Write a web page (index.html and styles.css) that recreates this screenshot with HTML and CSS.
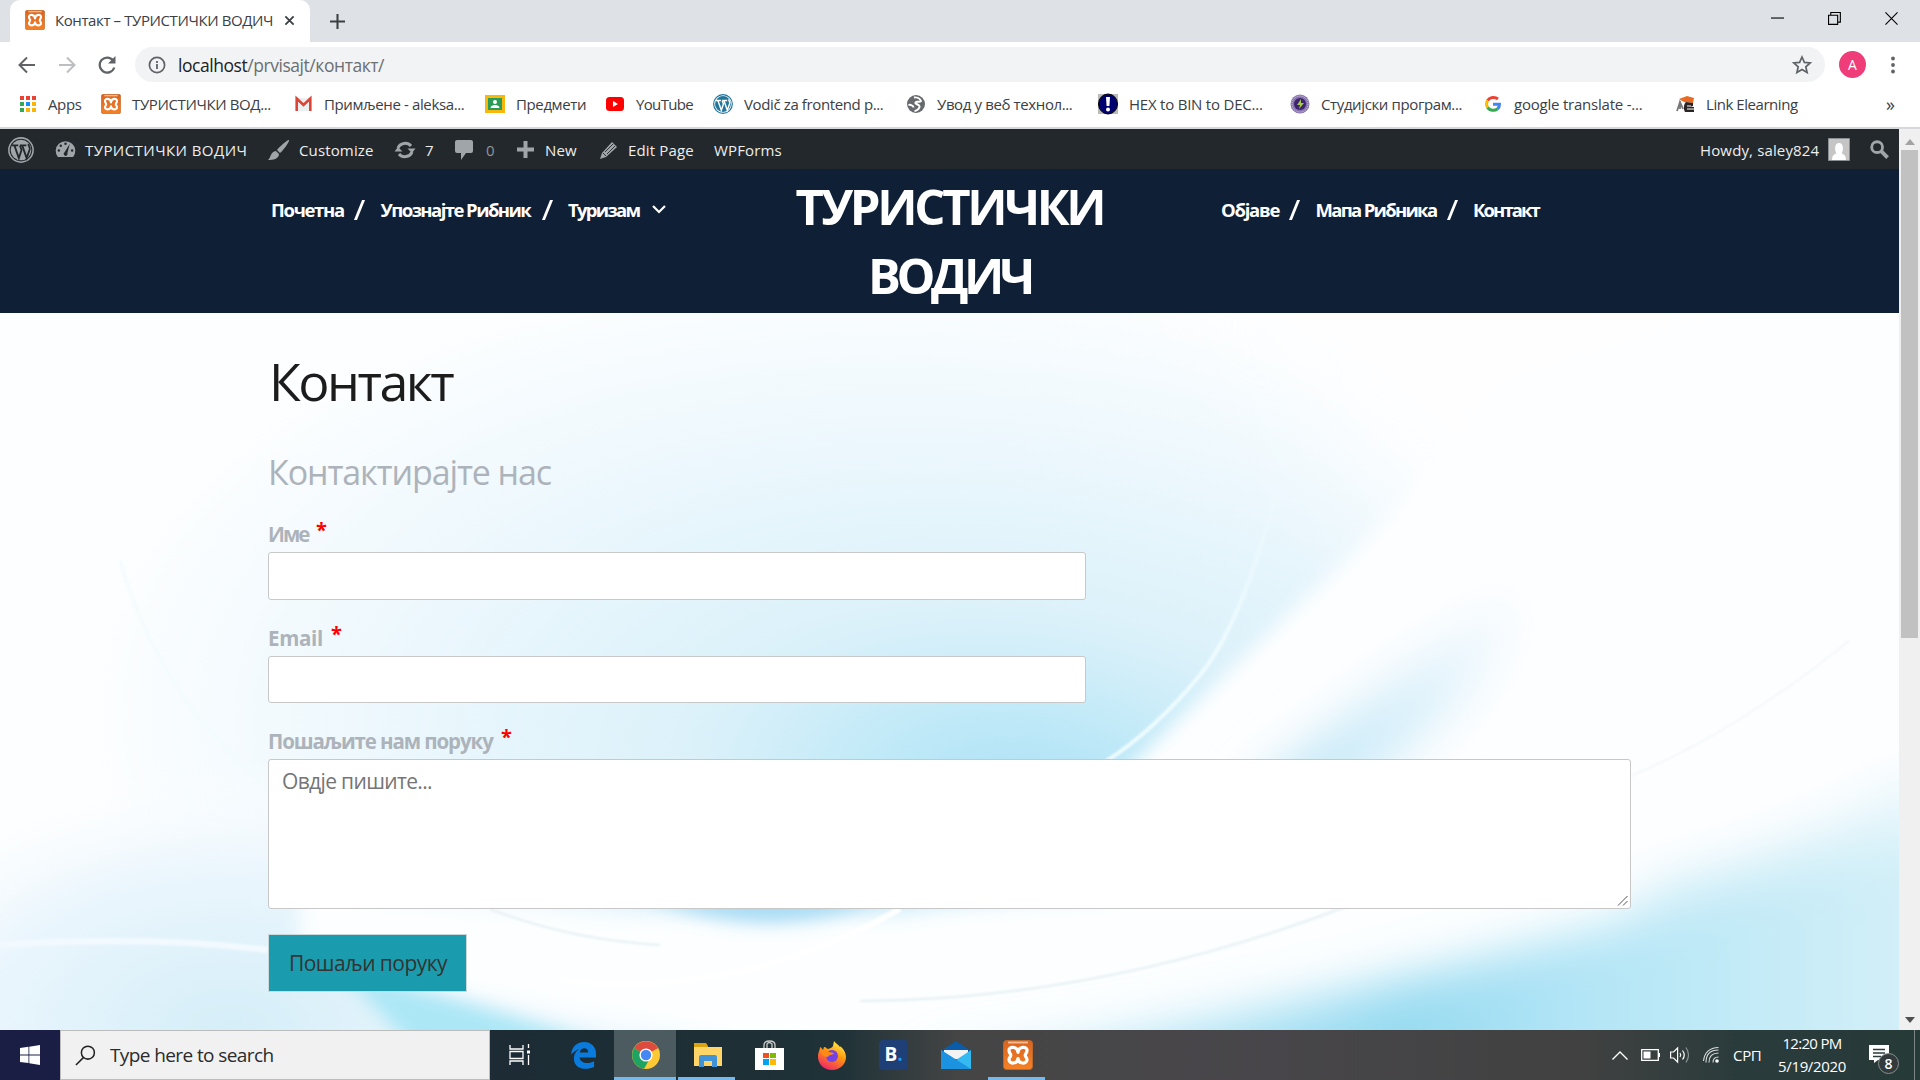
FILE: index.html
```html
<!DOCTYPE html>
<html lang="sr">
<head>
<meta charset="utf-8">
<title>Контакт – ТУРИСТИЧКИ ВОДИЧ</title>
<link rel="stylesheet" href="styles.css">
</head>
<body>
<svg class="defs" aria-hidden="true">
  <defs>
    <linearGradient id="xg" x1="0" y1="0" x2="0" y2="1"><stop offset="0" stop-color="#d9631f"/><stop offset="1" stop-color="#f58126"/></linearGradient>
    <symbol id="xampp" viewBox="0 0 30 30"><rect x=".5" y=".5" width="29" height="29" rx="3" fill="url(#xg)" stroke="#b8692f"/><path d="M5 2.500h20" stroke="#f9b68a" stroke-width="2"/><path d="M15 12.500C14.500 6 5.500 6 6 10.500 6 13 7.800 14 7.800 15.300 7.800 16.800 5.800 18 6 20 6.500 24.500 14.500 24 15 18.500 15.500 24 23.500 24.500 24 20 24.200 18 22.200 16.800 22.200 15.300 22.200 14 24 13 24 10.500 24.500 6 15.500 6 15 12.500z" fill="none" stroke="#fff" stroke-width="3.200" stroke-linejoin="round"/></symbol>
    <symbol id="wp" viewBox="0 0 24 24"><circle cx="12" cy="12" r="11.200" fill="none" stroke="currentColor" stroke-width="1.400"/><circle cx="12" cy="12" r="9.500" fill="currentColor"/><path d="M3.500 7.800h6M11 7.800h6M6 8l4 11.500L12.500 12 11 7.800M13.200 8l4 11.500L20 11.500c.7-2.500-1.500-3-1-5" fill="none" stroke="var(--w)" stroke-width="1.700"/></symbol>
  </defs>
</svg>

<div class="tabstrip">
  <div class="tab">
    <svg class="i20"><use href="#xampp"/></svg>
    <span class="tab-title">Контакт – ТУРИСТИЧКИ ВОДИЧ</span>
    <svg class="tab-close" viewBox="0 0 12 12"><path d="M1.500 1.500l9 9M10.500 1.500l-9 9" stroke="#3c4043" stroke-width="2"/></svg>
  </div>
  <svg class="tab-new" viewBox="0 0 16 16"><path d="M8 0v16M0 8h16" stroke="#3c4043" stroke-width="2.200"/></svg>
  <div class="window-buttons">
    <svg viewBox="0 0 14 14"><path d="M0 6.500h14" stroke="#000" stroke-width="1.200"/></svg>
    <svg viewBox="0 0 14 14"><path d="M.6 3.500h9.800v9.800H.6zM3 3.500V.6h10.300v10.300h-3" fill="none" stroke="#000" stroke-width="1.200"/></svg>
    <svg viewBox="0 0 14 14"><path d="M.5.5l13 13M13.500.5l-13 13" stroke="#000" stroke-width="1.200"/></svg>
  </div>
</div>

<div class="toolbar">
  <svg class="nav-icon" viewBox="0 0 20 20"><path d="M18 10H3M10 2.500L2.500 10l7.500 7.500" fill="none" stroke="#5f6368" stroke-width="2"/></svg>
  <svg class="nav-icon" viewBox="0 0 20 20"><path d="M2 10h15M10 2.500l7.500 7.500-7.500 7.500" fill="none" stroke="#bcbec1" stroke-width="2"/></svg>
  <svg class="nav-icon" viewBox="0 0 20 20"><path d="M16.500 6A7.500 7.500 0 1 0 17.300 12.500" fill="none" stroke="#5f6368" stroke-width="2.200"/><path d="M18.500 1v7.500H11z" fill="#5f6368"/></svg>
  <div class="omnibox">
    <svg class="info" viewBox="0 0 18 18"><circle cx="9" cy="9" r="7.600" fill="none" stroke="#5f6368" stroke-width="1.700"/><path d="M9 8v5M9 5v2" stroke="#5f6368" stroke-width="1.800"/></svg>
    <span class="url"><b>localhost</b>/prvisajt/контакт/</span>
    <svg class="star" viewBox="0 0 20 20"><path d="M10 2l2.400 5.400 5.800.5-4.400 3.900 1.300 5.700-5.100-3-5.100 3 1.300-5.700L1.800 7.900l5.800-.5z" fill="none" stroke="#5f6368" stroke-width="1.700"/></svg>
  </div>
  <span class="profile">A</span>
  <svg class="menu" viewBox="0 0 4 18"><circle cx="2" cy="2.500" r="1.900"/><circle cx="2" cy="9" r="1.900"/><circle cx="2" cy="15.500" r="1.900"/></svg>
</div>

<div class="bookmarks">
  <div class="bm"><svg class="i20" viewBox="0 0 20 20"><g fill="#ea4335"><path d="M3 2h4v4H3zM9 2h4v4H9zM15 2h4v4h-4z"/></g><path d="M3 8h4v4H3zM3 14h4v4H3z" fill="#34a853"/><path d="M9 8h4v4H9z" fill="#1a8cff"/><path d="M15 8h4v4h-4zM9 14h4v4H9zM15 14h4v4h-4z" fill="#fbb605"/></svg><span>Apps</span></div>
  <div class="bm"><svg class="i20"><use href="#xampp"/></svg><span>ТУРИСТИЧКИ ВОД...</span></div>
  <div class="bm"><svg class="i20" viewBox="0 0 20 20"><path d="M3 4h15v13H3z" fill="#eceff1"/><path d="M3.700 17V4.500L10.500 11l6.800-6.500V17" fill="none" stroke="#db4437" stroke-width="2.600"/></svg><span>Примљене - aleksa...</span></div>
  <div class="bm"><svg class="i20" viewBox="0 0 20 20"><path d="M0 1h20v18H0z" fill="#f6b80c"/><path d="M3 4h14v12H3z" fill="#2c9b58"/><circle cx="10" cy="8" r="2" fill="#fff"/><path d="M5.500 14c0-4 9-4 9 0z" fill="#fff"/></svg><span>Предмети</span></div>
  <div class="bm"><svg class="i20" viewBox="0 0 20 20"><rect x="1" y="3" width="18" height="14" rx="3.500" fill="#f00"/><path d="M8 7l5 3-5 3z" fill="#fff"/></svg><span>YouTube</span></div>
  <div class="bm"><svg class="i20 wp-blue"><use href="#wp"/></svg><span>Vodič za frontend p...</span></div>
  <div class="bm"><svg class="i20" viewBox="0 0 20 20"><circle cx="10" cy="10" r="9" fill="#66696d"/><path d="M8 3.500c3-.5 6 1 7 3.500-2 2-4-.5-5.500 1.500-1 2 4.500 1.500 4 4.500-.5 2-3 4-5 4M2.500 11c2-.5 5 .5 5 2.500" fill="none" stroke="#fff" stroke-width="2"/></svg><span>Увод у веб технол...</span></div>
  <div class="bm"><svg class="i20" viewBox="0 0 20 20"><path d="M0 0h20v20H0z" fill="#bbb"/><ellipse cx="10" cy="10" rx="9.500" ry="10" fill="#00006e" stroke="#000"/><path d="M8 3h4l-.6 9H8.600z" fill="#fff"/><circle cx="10" cy="15.500" r="2" fill="#fff"/></svg><span>HEX to BIN to DEC...</span></div>
  <div class="bm"><svg class="i20" viewBox="0 0 20 20"><circle cx="10" cy="10" r="9.500" fill="#8774ae"/><circle cx="10" cy="10" r="8" fill="none" stroke="#d5cbe4" stroke-dasharray="1 1"/><circle cx="10" cy="10" r="6" fill="#3e2372"/><path d="M11 5l-4 6h3l-1 4 5-6h-3z" fill="#a5c94a"/></svg><span>Студијски програм...</span></div>
  <div class="bm"><svg class="i20" viewBox="0 0 20 20" fill="none" stroke-width="3"><path d="M15 5A7 6.500 0 0 0 4.500 6.500" stroke="#ea4335"/><path d="M4.500 6.500a7 7 0 0 0 0 7" stroke="#fbbc05"/><path d="M4.500 13.500A7 6.500 0 0 0 14.500 15" stroke="#34a853"/><path d="M14.500 15c1.500-1.300 2-3 2-4.800H10" stroke="#4285f4"/></svg><span>google translate -...</span></div>
  <div class="bm"><svg class="i20" viewBox="0 0 20 20"><path d="M4 5l8-3 7 2-1 5-9-1z" fill="#e96a20"/><path d="M5 7v8M2 17l3-9 3 7" fill="none" stroke="#777" stroke-width="1.800"/><path d="M11 8l7 1v3l-3 1h4v5h-9c-2-4-1-8 1-10z" fill="#2a2422"/><path d="M12 12h4M12 15h7" stroke="#fff"/></svg><span>Link Elearning</span></div>
  <span class="more">»</span>
</div>

<div class="viewport">
  <div class="page">
    <div class="adminbar">
      <svg class="wp-grey"><use href="#wp"/></svg>
      <svg class="ab-dash" viewBox="0 0 22 20"><path d="M3 18a10.300 10.300 0 1 1 16 0z" fill="#a0a5aa"/><g fill="#23282d"><circle cx="11" cy="4" r="1.300"/><circle cx="6" cy="6" r="1.300"/><circle cx="4" cy="11" r="1.300"/><circle cx="18" cy="11" r="1.300"/><path d="M15.500 4L13 14a2 2 0 1 1-3-1z"/></g></svg>
      <span class="ab-site">ТУРИСТИЧКИ ВОДИЧ</span>
      <svg class="ab-brush" viewBox="0 0 22 22"><path d="M21 1c1 1-6 11-9 13l-3-3C11 8 20 0 21 1zM8 12l3 3c0 5-6 6-11 6 3-2 2-8 8-9z" fill="#a0a5aa"/></svg>
      <span class="ab-cust">Customize</span>
      <svg class="ab-upd" viewBox="0 0 22 20"><path d="M4 8a7.500 7 0 0 1 13-2M18 12a7.500 7 0 0 1-13 2" fill="none" stroke="#a0a5aa" stroke-width="3"/><path d="M13.500 8.500h8L18 13zM.5 11.500h8L4 7z" fill="#a0a5aa"/></svg>
      <span class="ab-seven">7</span>
      <svg class="ab-com" viewBox="0 0 18 20"><path d="M2 0h14q2 0 2 2v9q0 2-2 2h-5l-5 7v-7H2q-2 0-2-2V2q0-2 2-2z" fill="#a0a5aa"/></svg>
      <span class="ab-zero">0</span>
      <svg class="ab-plus" viewBox="0 0 17 17"><path d="M8.500 0v17M0 8.500h17" stroke="#a0a5aa" stroke-width="4"/></svg>
      <span class="ab-new">New</span>
      <svg class="ab-pen" viewBox="0 0 18 18"><path d="M12 1l5 5L6 16l-6 2 2-6z" fill="#a0a5aa"/><path d="M3 12l3 3M5 11l8-8M7 13l8-8" stroke="#23282d" stroke-width=".9"/></svg>
      <span class="ab-edit">Edit Page</span>
      <span class="ab-forms">WPForms</span>
      <span class="ab-howdy">Howdy, saley824</span>
      <svg class="ab-avatar" viewBox="0 0 22 23"><path d="M.5.5h21v22H.5z" fill="#c5c5c5" stroke="#8a8f94"/><path d="M4 22c0-4 2-6 4.500-6.500C6.500 13 6 5 11 5s4.500 8 2.500 10.500C16 16 18 18 18 22z" fill="#fff"/></svg>
      <svg class="ab-search" viewBox="0 0 20 20"><circle cx="7.500" cy="7.500" r="5.700" fill="none" stroke="#a0a5aa" stroke-width="3"/><path d="M11.500 11.500l7 7" stroke="#a0a5aa" stroke-width="4"/></svg>
    </div>

    <header class="site-header">
      <nav class="nav-left">
        <span class="n1">Почетна</span><i></i><span class="n2">Упознајте Рибник</span><i></i><span class="n3">Туризам</span>
        <svg class="chev" viewBox="0 0 14 9"><path d="M1 1l6 6 6-6" fill="none" stroke="#fff" stroke-width="2.200"/></svg>
      </nav>
      <div class="site-title"><span class="t1">ТУРИСТИЧКИ</span><span class="t2">ВОДИЧ</span></div>
      <nav class="nav-right">
        <span class="n4">Објаве</span><i></i><span class="n5">Мапа Рибника</span><i></i><span class="n6">Контакт</span>
      </nav>
    </header>

    <main class="content">
      <svg class="backdrop" viewBox="0 313 1899 717" preserveAspectRatio="none">
        <defs>
          <radialGradient id="glow" gradientUnits="userSpaceOnUse" cx="0" cy="0" r="1" gradientTransform="translate(1030 800) rotate(8) scale(960 520)"><stop offset="0" stop-color="#ace1f7"/><stop offset=".14" stop-color="#bde8f7"/><stop offset=".35" stop-color="#dbf1fa"/><stop offset=".65" stop-color="#ebf7fd"/><stop offset="1" stop-color="#fdfeff"/></radialGradient>
          <radialGradient id="left" gradientUnits="userSpaceOnUse" cx="0" cy="0" r="1" gradientTransform="translate(230 1030) scale(440 270)"><stop offset="0" stop-color="#d5eef8"/><stop offset=".6" stop-color="#ebf6fd"/><stop offset="1" stop-color="#fff" stop-opacity="0"/></radialGradient>
          <linearGradient id="deep" gradientUnits="userSpaceOnUse" x1="1000" y1="0" x2="1899" y2="0"><stop offset="0" stop-color="#c5eaf7"/><stop offset=".45" stop-color="#98dbf1"/><stop offset=".65" stop-color="#b3e5f6"/><stop offset="1" stop-color="#d2eff8"/></linearGradient>
          <linearGradient id="arc" gradientUnits="userSpaceOnUse" x1="0" y1="470" x2="0" y2="640"><stop offset="0" stop-color="#effcff" stop-opacity="0"/><stop offset="1" stop-color="#effcff"/></linearGradient>
          <linearGradient id="streak" gradientUnits="userSpaceOnUse" x1="1290" y1="780" x2="1500" y2="590"><stop offset="0" stop-color="#bfe6f6"/><stop offset="1" stop-color="#f4faff"/></linearGradient>
          <filter id="b30" x="-50%" y="-50%" width="200%" height="200%"><feGaussianBlur stdDeviation="24"/></filter>
          <filter id="b60" x="-60%" y="-60%" width="220%" height="220%"><feGaussianBlur stdDeviation="60"/></filter>
          <filter id="b12" x="-50%" y="-50%" width="200%" height="200%"><feGaussianBlur stdDeviation="9"/></filter>
          <filter id="b1" x="-10%" y="-10%" width="120%" height="120%"><feGaussianBlur stdDeviation="1"/></filter>
        </defs>
        <path d="M0 313h1899v717H0z" fill="#fdfeff"/>
        <path d="M0 313h1899v717H0z" fill="url(#glow)"/>
        <path d="M0 313h1899v717H0z" fill="url(#left)"/>
        <path d="M1120 200Q1310 330 1410 520L1700 700V200z" fill="#fefeff" filter="url(#b60)"/>
        <path d="M1110 785Q1240 660 1330 575T1500 380L1950 250V1100H1110z" fill="#fdfeff" filter="url(#b12)"/>
        <path d="M1240 800Q1370 690 1520 590 1490 710 1330 800z" fill="url(#streak)" filter="url(#b30)"/>
        <path d="M300 885Q480 910 620 915H900Q1000 890 1640 880L1500 1050H760Q520 1000 300 970z" fill="#fcfeff" filter="url(#b12)"/>
        <path d="M620 885H900Q850 918 780 922T620 885z" fill="#a8dcf4" filter="url(#b12)"/>
        <path d="M340 970Q480 1005 640 1055H420z" fill="#ace7f6" filter="url(#b12)"/>
        <path d="M1640 880Q1780 850 1930 770V900L1640 980z" fill="#e4f5fb" filter="url(#b30)"/>
        <path d="M940 1065Q1300 1015 1640 915 1800 860 1950 830V1120H940z" fill="url(#deep)" filter="url(#b30)"/>
        <g fill="none" filter="url(#b1)"><path d="M1282 470Q1245 620 1200 675T1105 762" stroke="url(#arc)" stroke-width="4"/><path d="M1850 640Q1740 730 1631 776" stroke="#f3f8fa" stroke-width="2"/><path d="M490 909Q570 940 660 945M860 1001Q1100 1000 1345 907" stroke="#e3eff2" stroke-width="2"/><path d="M900 909Q740 1000 560 980" stroke="#fff" stroke-width="6"/><path d="M120 560Q160 700 270 790" stroke="#f3fcfd" stroke-width="3"/><path d="M0 945Q150 935 268 950" stroke="#f3faff" stroke-width="6"/></g>
      </svg>
      <h1>Контакт</h1>
      <h2>Контактирајте нас</h2>
      <form class="form">
        <label><span class="l1">Име</span><sup>*</sup></label>
        <div class="field"></div>
        <label><span class="l2">Email</span><sup>*</sup></label>
        <div class="field"></div>
        <label><span class="l3">Пошаљите нам поруку</span><sup>*</sup></label>
        <div class="message"><span>Овдје пишите...</span><svg viewBox="0 0 11 11"><path d="M1 10.500l9.500-9.500M6 10.500L10.500 6" stroke="#555" stroke-width="1"/></svg></div>
        <div class="submit"><span>Пошаљи поруку</span></div>
      </form>
    </main>
  </div>
  <div class="scrollbar">
    <svg viewBox="0 0 10 6"><path d="M0 6l5-6 5 6z" fill="#a3a3a3"/></svg>
    <div class="thumb"></div>
    <svg viewBox="0 0 10 6"><path d="M0 0l5 6 5-6z" fill="#505050"/></svg>
  </div>
</div>

<div class="taskbar">
  <div class="start"><svg viewBox="0 0 20 20"><path d="M0 3l8.500-1.200v7.700H0zM9.300 1.700L20 0v9.500H9.300zM0 10.400h8.500v7.700L0 17zM9.300 10.400H20V20L9.300 18.300z" fill="#fff"/></svg></div>
  <div class="search"><svg viewBox="0 0 22 22"><circle cx="13.500" cy="8" r="6.800" fill="none" stroke="#222" stroke-width="1.600"/><path d="M9 13l-8 8" stroke="#222" stroke-width="1.600"/></svg><span>Type here to search</span></div>
  <div class="task"><svg width="22" height="22" viewBox="0 0 22 22"><path d="M1 1v4h13V1M1 21v-4h13v4M1 7.500h13v7H1zM19.500 0v4M19.500 11v10" fill="none" stroke="#fff" stroke-width="1.300"/><path d="M18 6.500h3v3h-3z" fill="#fff"/></svg></div>
  <div class="task"><svg width="25" height="27" viewBox="0 0 26 28"><path d="M0 13C1 4 7 0 13.500 0 21 0 26 5 26 12v4H9c0 5 8 8 15 4v6c-9 4-21 2-21-9 0-5 3-8 6-10-3 1-6 3-9 6zM9 11h9c0-6-8-6-9 0z" fill="#0a7bdc"/></svg></div>
  <div class="task active"><svg width="28" height="28" viewBox="0 0 28 28"><circle cx="14" cy="14" r="14" fill="#fcc934"/><path d="M14 14L2 7A14 14 0 0 1 26.100 7z" fill="#dd4b3e"/><path d="M14 14L2 7a14 14 0 0 0 10 20.800l7-12z" fill="#1da462"/><circle cx="14" cy="14" r="6.600" fill="#fff"/><circle cx="14" cy="14" r="5.200" fill="#4587f3"/></svg></div>
  <div class="task files"><svg width="28" height="24" viewBox="0 0 28 24"><path d="M0 0h12l2 3v5H0z" fill="#dda20f"/><path d="M0 4h28v19H0z" fill="#ffd567"/><path d="M5 24V14q0-2 2-2h14q2 0 2 2v10h-5v-6h-8v6z" fill="#3f93d6"/></svg></div>
  <div class="task"><svg width="29" height="30" viewBox="0 0 29 30"><path d="M9 8V5q0-4 5.500-4T20 5v3M12 8V4q2-3 5 0v4" fill="none" stroke="#ccc" stroke-width="1.300"/><path d="M0 8h29v22H0z" fill="#fff"/><path d="M8 13h6v5H8z" fill="#f25022"/><path d="M15 13h6v5h-6z" fill="#7fba00"/><path d="M8 19h6v6H8z" fill="#00a4ef"/><path d="M15 19h6v6h-6z" fill="#ffb900"/></svg></div>
  <div class="task"><svg width="28" height="29" viewBox="0 0 28 29"><defs><linearGradient id="ff" x1=".8" y1="0" x2=".3" y2="1"><stop offset="0" stop-color="#fff44f"/><stop offset=".45" stop-color="#ff980e"/><stop offset="1" stop-color="#f0246a"/></linearGradient></defs><path d="M16 0c2 3 4 3 6 6 0-2 6 4 6 10 0 7-6 13-14 13S0 23 0 16c0-5 2-7 2-10 2 1 2 2 3 3l1-3c2 0 3 2 4 2 2-1 4-1 5-3z" fill="url(#ff)"/><circle cx="14" cy="15" r="6" fill="#7542e5"/><path d="M3 10c4-2 6-1 8 1l5 1c-2 3-5 1-6 4-5 0-6-3-7-6z" fill="#ff8a16"/></svg></div>
  <div class="task"><div class="booking">B<em>.</em></div></div>
  <div class="task"><svg width="30" height="28" viewBox="0 0 30 28"><path d="M0 10L15 0l15 10z" fill="#0a5ba8"/><path d="M3 9h24v9H3z" fill="#f3f3f3"/><path d="M0 9l15 10L30 9v19H0z" fill="#35b9f1"/><path d="M0 9l30 19H0z" fill="#1c93e0"/></svg></div>
  <div class="task open"><svg width="30" height="30"><use href="#xampp"/></svg></div>
  <div class="tray">
    <svg class="t-up" viewBox="0 0 16 9"><path d="M.5 8.500L8 1l7.500 7.500" fill="none" stroke="#fff" stroke-width="1.400"/></svg>
    <svg class="t-bat" viewBox="0 0 19 12"><path d="M.7.700h16.600v10.600H.7z" fill="none" stroke="#fff" stroke-width="1.300"/><path d="M2.500 2.500h7v7h-7zM17.500 4H19v4h-1.500z" fill="#fff"/></svg>
    <svg class="t-vol" viewBox="0 0 20 18"><path d="M.6 6h3l4-4v14l-4-4h-3z" fill="none" stroke="#fff" stroke-width="1.200"/><path d="M10 7q1.500 2 0 4M12.500 4.500q3.500 4.500 0 9" fill="none" stroke="#fff" stroke-width="1.200"/><path d="M16 1.500q5 7.500 0 15" fill="none" stroke="#8a9090" stroke-width="1.200"/></svg>
    <svg class="t-wifi" viewBox="0 0 16 16"><circle cx="14" cy="14" r="1.800" fill="#fff"/><path d="M10 15.500Q10 10 15.500 10M6 15.500Q6 6 15.500 6M3 15.500Q3 3 15.500 3M.5 14Q2 1 15.500.5" fill="none" stroke="#d8dcdc" stroke-width="1.100"/></svg>
    <span class="lang">СРП</span>
    <div class="clock"><span class="tm">12:20 PM</span><span class="dt">5/19/2020</span></div>
    <div class="notif"><svg viewBox="0 0 20 18"><path d="M0 0h20v15H9l-4 3v-3H0z" fill="#fff"/><path d="M4 4.500h12M4 8h12M4 11.500h8" stroke="#2a3b3b" stroke-width="1.300"/></svg><b>8</b></div>
    <div class="peek"></div>
  </div>
</div>
</body>
</html>
```

FILE: styles.css
```css
* { box-sizing: border-box; }
body { margin: 0; width: 1920px; height: 1080px; overflow: hidden; display: flex; flex-direction: column; background: #fff; font-family: "Open Sans", "Noto Sans", sans-serif; font-size: 15px; color: #3c4043; }
svg { display: block; flex: none; overflow: visible; }
span { white-space: nowrap; flex: none; }
.defs { position: absolute; width: 0; height: 0; }
.i20 { width: 20px; height: 20px; }

/* browser window */
.tabstrip { height: 42px; background: #dee1e6; display: flex; align-items: center; }
.tab { width: 300px; height: 42px; margin-left: 10px; padding: 0 14px 2px 15px; background: #fff; border-radius: 10px 10px 0 0; display: flex; align-items: center; }
.tab-title { width: 229px; margin-left: 10px; letter-spacing: -.4px; }
.tab-close { width: 11px; height: 11px; }
.tab-new { width: 15px; height: 15px; margin-left: 20px; }
.window-buttons { margin-left: auto; margin-right: 22px; display: flex; gap: 44px; margin-top: -5px; }
.window-buttons svg { width: 13px; height: 13px; }
.toolbar { height: 44px; padding: 1px 25px 0 17px; display: flex; align-items: center; }
.nav-icon { width: 20px; height: 20px; margin-right: 20px; }
.omnibox { width: 1690px; height: 35px; border-radius: 18px; background: #f1f3f4; display: flex; align-items: center; padding: 0 13px; margin-left: -2px; }
.info { width: 18px; height: 18px; }
.url { margin-left: 12px; font-size: 17.500px; letter-spacing: -.45px; color: #6b6f73; }
.url b { font-weight: 400; color: #202124; }
.star { width: 20px; height: 20px; margin-left: auto; }
.profile { width: 27px; height: 27px; margin-left: 14px; border-radius: 50%; background: #ee3d79; color: #fff; font-size: 14px; line-height: 27px; text-align: center; }
.menu { width: 4px; height: 18px; margin-left: auto; fill: #5f6368; }
.bookmarks { height: 43px; padding: 0 0 5px 17px; border-bottom: 2px solid #d6d8db; display: flex; align-items: center; }
.bm { width: 192px; display: flex; align-items: center; gap: 11px; letter-spacing: -.38px; }
.bm:nth-child(1) { width: 84px; }
.bm:nth-child(4) { width: 120px; }
.bm:nth-child(5) { width: 108px; letter-spacing: -.65px; }
.bm:nth-child(6), .bm:nth-child(9) { width: 193px; }
.bm:nth-child(8), .bm:nth-child(10) { letter-spacing: -.22px; }
.bm:nth-child(11) { width: 211px; letter-spacing: -.45px; }
.wp-blue { color: #21759b; --w: #fff; }
.more { font-size: 18px; }

.viewport { height: 901px; display: flex; }
.page { width: 1899px; display: flex; flex-direction: column; }
.scrollbar { width: 21px; background: #f0f0f0; display: flex; flex-direction: column; align-items: center; padding: 10px 0 7px; }
.scrollbar svg { width: 10px; height: 6px; }
.thumb { width: 17px; height: 488px; margin: 5px 0 auto; background: #c1c1c1; }

/* admin bar */
.adminbar { height: 40px; background: #23282d; color: #eee; display: flex; align-items: center; padding: 1px 10px 0 8px; letter-spacing: .14px; }
.wp-grey { width: 26px; height: 26px; color: #a0a5aa; --w: #23282d; }
.ab-dash { width: 21px; height: 19px; margin-left: 21px; }
.ab-site { width: 183px; margin-left: 9px; letter-spacing: .44px; }
.ab-brush { width: 22px; height: 22px; }
.ab-cust { width: 95px; margin-left: 9px; }
.ab-upd { width: 22px; height: 20px; }
.ab-seven { width: 30px; margin-left: 9px; }
.ab-com { width: 18px; height: 20px; }
.ab-zero { width: 31px; margin-left: 13px; color: #8f9498; }
.ab-plus { width: 17px; height: 17px; }
.ab-new { width: 55px; margin-left: 11px; }
.ab-pen { width: 18px; height: 18px; }
.ab-edit { width: 86px; margin-left: 10px; }
.ab-howdy { width: 128px; margin-left: auto; }
.ab-avatar { width: 22px; height: 23px; }
.ab-search { width: 19px; height: 19px; margin-left: 20px; }

/* site */
.site-header { height: 144px; background: #0f1f35; color: #fff; font-weight: 700; display: grid; grid-template-columns: 271px 500px 357px 93px 1fr; }
.nav-left { grid-column: 2; }
.nav-right { grid-column: 5; }
.nav-left, .nav-right { display: flex; align-items: center; height: 27px; margin-top: 27px; font-size: 18.500px; letter-spacing: -1.550px; }
.n1 { width: 73px; letter-spacing: -1.300px; }
.n2 { width: 151px; }
.n3 { width: 71px; letter-spacing: -1.700px; }
.n4 { width: 58px; letter-spacing: -1.250px; }
.n5 { width: 121px; letter-spacing: -1.700px; }
.n6 { width: 67px; letter-spacing: -1.900px; }
.site-header i { width: 2.500px; height: 20px; margin: 0 20px 0 14px; background: #fff; transform: skewX(-22deg); }
.chev { width: 14px; height: 9px; margin-left: 13px; }
.site-title { grid-column: 3; display: flex; flex-direction: column; align-items: center; padding-top: 3px; font-size: 49px; line-height: 69px; letter-spacing: -3.300px; }
.t2 { letter-spacing: -4.500px; }
.content { position: relative; height: 717px; padding-left: 268px; }
.backdrop { position: absolute; inset: 0; width: 100%; height: 100%; overflow: hidden; }
h1, h2, .form { position: relative; margin: 0; font-weight: 400; }
h1 { padding: 32px 0 0 1px; font-size: 52px; line-height: 72px; letter-spacing: -2.500px; color: #1c1c1c; }
h2 { padding: 31px 0 0 0; font-size: 34px; line-height: 48px; letter-spacing: -1.100px; color: #adb3ba; }
.form { padding-top: 22px; }
label { display: flex; height: 34px; line-height: 32px; font-size: 20.500px; font-weight: 700; color: #adb3ba; }
.l1 { width: 48px; letter-spacing: -2px; }
.l2 { width: 63px; letter-spacing: -.3px; }
.l3 { width: 233px; letter-spacing: -1.100px; }
sup { color: #f00; font-size: 20px; line-height: 24px; }
.field { width: 818px; height: 48px; margin-bottom: 22px; background: #fff; border: 1px solid #c8c8c8; border-radius: 3px; }
.field ~ .field { height: 47px; }
.message { position: relative; width: 1363px; height: 150px; padding: 4px 13px; background: #fff; border: 1px solid #c8c8c8; border-radius: 3px; font-size: 21px; line-height: 34px; letter-spacing: -.65px; color: #757575; }
.message > svg { position: absolute; right: 2px; bottom: 2px; width: 11px; height: 11px; }
.submit { width: 199px; height: 58px; margin-top: 25px; border: 1px solid #ccd8da; background: #1b9cae; color: #333; font-size: 21px; line-height: 56px; letter-spacing: -.55px; padding-left: 20px; }

/* taskbar */
.taskbar { height: 50px; display: flex; background: linear-gradient(90deg, #1c2b34 490px, #1f3237 840px, #454545 960px, #48464a 1250px, #414141 1580px, #2a3b3b 1740px, #263a38); }
.start { width: 60px; background: #1a1e45; display: flex; align-items: center; justify-content: center; }
.start svg { width: 20px; height: 20px; }
.search { width: 430px; background: #f1f1f1; border: 1px solid #bcbcbc; display: flex; align-items: center; padding-left: 14px; color: #2b2b2b; font-size: 19px; letter-spacing: -.6px; gap: 14px; }
.search svg { width: 21px; height: 21px; }
.task { width: 62px; display: flex; align-items: center; justify-content: center; border-bottom: 3px solid transparent; padding: 3px 0 0 1px; }
.task:nth-child(3) { padding-right: 3px; }
.task.active { background: #4c5b60; border-color: #76b9ed; }
.task.files, .task.open { border-image: linear-gradient(90deg, transparent 5px, #76b9ed 5px 56px, transparent 56px) 3; }
.booking { width: 29px; height: 30px; border-radius: 4px; background: #1f3f77; color: #fff; font-weight: 700; font-size: 19px; line-height: 29px; text-align: center; }
.booking em { color: #1ba0e8; font-style: normal; }
.tray { margin-left: auto; display: flex; align-items: center; color: #fff; }
.t-up { width: 16px; height: 9px; }
.t-bat { width: 19px; height: 12px; margin-left: 13px; }
.t-vol { width: 20px; height: 18px; margin-left: 10px; }
.t-wifi { width: 16px; height: 16px; margin-left: 13px; }
.lang { width: 45px; margin-left: 14px; letter-spacing: -.3px; }
.clock { width: 68px; display: flex; flex-direction: column; align-items: center; line-height: 23px; }
.tm { letter-spacing: -.7px; }
.dt { letter-spacing: -.34px; }
.notif { position: relative; width: 45px; margin-left: 23px; height: 20px; }
.notif svg { width: 20px; height: 18px; }
.notif b { position: absolute; left: 9px; top: 8px; width: 21px; height: 21px; border-radius: 50%; border: 1px solid #8a8f8f; background: #333a3c; font-size: 14px; line-height: 19px; text-align: center; font-weight: 600; }
.peek { width: 6px; height: 50px; border-left: 1px solid #7b8585; }
```
